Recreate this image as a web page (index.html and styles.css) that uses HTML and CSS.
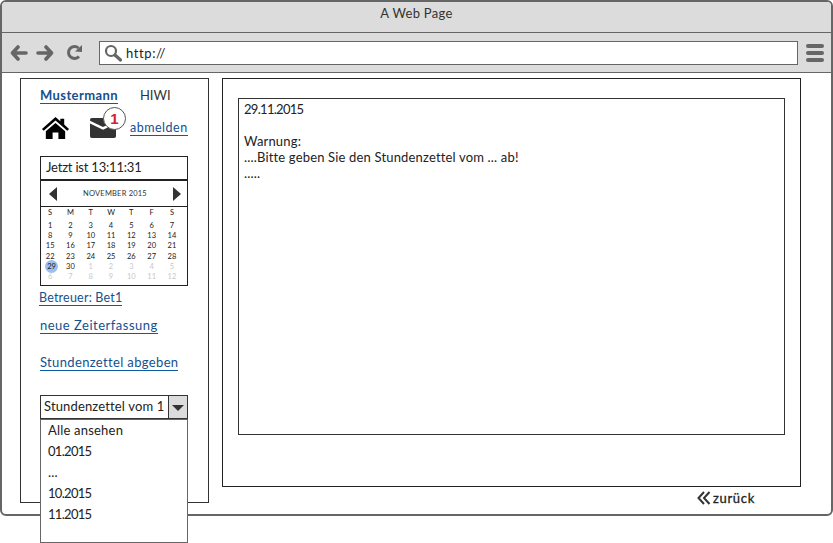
FILE: index.html
```html
<!DOCTYPE html>
<html lang="de">
<head>
<meta charset="utf-8">
<title>A Web Page</title>
<link rel="stylesheet" href="styles.css">
</head>
<body>
<div class="window">
  <header class="titlebar">A Web Page</header>
  <div class="toolbar">
    <svg class="nav-icon" width="18" height="16" viewBox="0 0 18 16"><path d="M8 2 2.500 8 8 14M3 8H16" fill="none" stroke="#666" stroke-width="3.600" stroke-linecap="round" stroke-linejoin="round"/></svg>
    <svg class="nav-icon" width="18" height="16" viewBox="0 0 18 16"><path d="M10 2 15.500 8 10 14M15 8H2" fill="none" stroke="#666" stroke-width="3.600" stroke-linecap="round" stroke-linejoin="round"/></svg>
    <svg class="reload" width="17" height="17" viewBox="0 0 17 17"><path d="M13 12.500A6 6 0 1 1 12.500 4" fill="none" stroke="#666" stroke-width="3"/><path d="M9 7.500 16 8V1Z" fill="#666"/></svg>
    <div class="address">
      <svg width="18" height="18" viewBox="0 0 18 18"><circle cx="7" cy="7" r="5" fill="none" stroke="#666" stroke-width="2.200"/><path d="M11 11 16.500 16" stroke="#666" stroke-width="3.200" stroke-linecap="round"/></svg>
      <span>http://</span>
    </div>
    <div class="menu"><i></i><i></i><i></i></div>
  </div>
  <div class="content">
    <aside class="sidebar">
      <div class="user-row">
        <a class="link bold" href="#">Mustermann</a>
        <span class="role">HIWI</span>
      </div>
      <div class="icon-row">
        <svg class="home" width="29" height="24" viewBox="0 0 30 26" preserveAspectRatio="none"><path d="M15 1 1 14l1.800 2L15 5l12.200 11 1.800-2-5-4.700V3h-4v2.600Z" fill="#000"/><path d="M5 16.500 15 7.500l10 9V25h-7v-7h-6v7H5Z" fill="#000"/></svg>
        <div class="mail">
          <svg width="26" height="20" viewBox="0 0 28 22" preserveAspectRatio="none"><path d="M2 0h24a2 2 0 0 1 2 2v1L14 10 0 3V2a2 2 0 0 1 2-2ZM0 6l14 7 14-7v14a2 2 0 0 1-2 2H2a2 2 0 0 1-2-2Z" fill="#333"/></svg>
          <span class="badge">1</span>
        </div>
        <a class="link" href="#">abmelden</a>
      </div>
      <div class="clock">Jetzt ist 13:11:31</div>
      <div class="calendar">
        <div class="cal-head">
          <span class="arrow left"></span>
          <span class="month">NOVEMBER 2015</span>
          <span class="arrow right"></span>
        </div>
        <div class="cal-grid">
          <span>S</span><span>M</span><span>T</span><span>W</span><span>T</span><span>F</span><span>S</span>
          <span>1</span><span>2</span><span>3</span><span>4</span><span>5</span><span>6</span><span>7</span>
          <span>8</span><span>9</span><span>10</span><span>11</span><span>12</span><span>13</span><span>14</span>
          <span>15</span><span>16</span><span>17</span><span>18</span><span>19</span><span>20</span><span>21</span>
          <span>22</span><span>23</span><span>24</span><span>25</span><span>26</span><span>27</span><span>28</span>
          <span class="today">29</span><span>30</span><span class="other">1</span><span class="other">2</span><span class="other">3</span><span class="other">4</span><span class="other">5</span>
          <span class="other">6</span><span class="other">7</span><span class="other">8</span><span class="other">9</span><span class="other">10</span><span class="other">11</span><span class="other">12</span>
        </div>
      </div>
      <a class="link betreuer" href="#">Betreuer: Bet1</a>
      <a class="link neue" href="#">neue Zeiterfassung</a>
      <a class="link abgeben" href="#">Stundenzettel abgeben</a>
      <div class="combo">
        <div class="combo-field">
          <span class="combo-text">Stundenzettel vom 1</span>
          <span class="combo-btn"><b></b></span>
        </div>
        <ul class="combo-list">
          <li>Alle ansehen</li>
          <li class="num">01.2015</li>
          <li>...</li>
          <li class="num">10.2015</li>
          <li class="num">11.2015</li>
        </ul>
      </div>
    </aside>
    <div class="main-col">
      <main class="main">
        <div class="message">
          <p class="num">29.11.2015</p>
          <p class="warn">Warnung:</p>
          <p>....Bitte geben Sie den Stundenzettel vom ... ab!</p>
          <p>.....</p>
        </div>
      </main>
      <a class="back" href="#">
        <svg width="14" height="14" viewBox="0 0 14 14"><path d="M7 1 1.500 7 7 13M12.500 1 7 7 12.500 13" fill="none" stroke="#333" stroke-width="2"/></svg>
        <span>zurück</span>
      </a>
    </div>
  </div>
</div>
</body>
</html>
```
FILE: styles.css
```css
* { box-sizing: border-box; }
html, body { margin: 0; padding: 0; }
body {
  width: 833px;
  height: 543px;
  overflow: hidden;
  background: #fff;
  font-family: "Lato", "Liberation Sans", sans-serif;
  color: #222;
}
.window {
  width: 833px;
  height: 516px;
  border: 2px solid #666;
  border-radius: 6px;
  display: flex;
  flex-direction: column;
}
.titlebar {
  height: 31px;
  background: #dcdcdc;
  border-bottom: 1px solid #666;
  border-radius: 4px 4px 0 0;
  text-align: center;
  font-size: 13px;
  line-height: 22px;
  letter-spacing: .3px;
  color: #333;
}
.toolbar {
  height: 40px;
  background: #dcdcdc;
  border-bottom: 1px solid #666;
  display: flex;
  align-items: center;
  padding: 0 7px 0 8px;
}
.nav-icon { margin-right: 8px; }
.reload { margin: 0 8px 0 4px; }
.address {
  width: 699px;
  height: 24px;
  margin-left: 8px;
  background: #fff;
  border: 1px solid #666;
  display: flex;
  align-items: center;
  gap: 4px;
  padding-left: 4px;
  font-size: 13px;
  letter-spacing: .6px;
}
.menu {
  margin-left: 8px;
  width: 18px;
  display: flex;
  flex-direction: column;
  gap: 3px;
}
.menu i { height: 4px; background: #666; border-radius: 2px; }
.content {
  flex: 1;
  min-height: 0;
  display: flex;
  padding: 5px 30px 0 18px;
  gap: 13px;
}
.sidebar {
  position: relative;
  width: 189px;
  height: 425px;
  border: 1px solid #333;
  padding: 9px 19px 0;
  display: flex;
  flex-direction: column;
  align-items: flex-start;
}
.link {
  color: #14508f;
  font-size: 13px;
  line-height: 15px;
  letter-spacing: .5px;
  text-decoration: none;
  border-bottom: 1px solid #0a5aa5;
}
.bold { font-weight: 700; letter-spacing: .4px; }
.user-row { display: flex; gap: 22px; align-items: flex-start; height: 18px; }
.role { font-size: 13px; line-height: 15px; letter-spacing: 0; color: #333; }
.icon-row {
  display: flex;
  align-items: flex-end;
  height: 27px;
  margin-top: 8px;
  width: 148px;
  margin-bottom: 15px;
}
.home { margin: 0 19px 1px 1px; }
.mail { position: relative; width: 26px; height: 23px; margin: 0 14px 3px 1px; }
.mail svg { display: block; width: 26px; height: 20px; margin-top: 3px; }
.badge {
  position: absolute;
  left: 13px;
  top: -8px;
  width: 23px;
  height: 23px;
  border: 1px solid #555;
  border-radius: 50%;
  background: #fff;
  color: #d2202c;
  font: 700 15px/21px "Liberation Sans", sans-serif;
  text-align: center;
}
.icon-row .link { font-size: 12.500px; margin-bottom: 5px; }
.clock {
  width: 148px;
  height: 24px;
  border: 1px solid #222;
  padding-left: 5px;
  font-size: 13px;
  line-height: 21px;
  letter-spacing: -.2px;
}
.calendar {
  width: 148px;
  height: 106px;
  border: 1px solid #222;
}
.cal-head {
  height: 26px;
  border-bottom: 1px solid #222;
  display: flex;
  align-items: center;
  justify-content: space-between;
  padding: 0 6px 0 8px;
}
.month { font-size: 7.500px; letter-spacing: .2px; color: #333; }
.arrow { width: 0; height: 0; border-top: 7px solid transparent; border-bottom: 7px solid transparent; }
.arrow.left { border-right: 8px solid #333; }
.arrow.right { border-left: 8px solid #333; }
.cal-grid {
  display: grid;
  grid-template-columns: repeat(7, 20.300px);
  grid-template-rows: 13px;
  grid-auto-rows: 10.200px;
  padding: 1px 0 0 0;
  margin-left: -1px;
  font-size: 7.500px;
  line-height: 10.200px;
  text-align: center;
  color: #222;
}
.cal-grid .other { color: #c8c8c8; }
.cal-grid .today {
  background: #9dbfee;
  border-radius: 50%;
  width: 13px;
  height: 13px;
  margin: -2px 0 0 5px;
  line-height: 13px;
}
.betreuer { margin: 4px 0 0 -1px; font-size: 12.500px; letter-spacing: .2px; }
.neue { margin-top: 12px; }
.abgeben { margin-top: 21px; letter-spacing: .35px; }
.combo { margin-top: 24px; width: 148px; }
.combo-field {
  height: 24px;
  border: 1px solid #333;
  display: flex;
  background: #fff;
}
.combo-text {
  flex: 1;
  white-space: nowrap;
  overflow: hidden;
  padding-left: 3px;
  font-size: 13px;
  line-height: 21px;
  letter-spacing: .15px;
}
.combo-btn {
  width: 19px;
  background: #dcdcdc;
  border-left: 1px solid #333;
  display: flex;
  align-items: center;
  justify-content: center;
}
.combo-btn b {
  width: 0;
  height: 0;
  border-left: 6px solid transparent;
  border-right: 6px solid transparent;
  border-top: 6px solid #333;
  margin-top: 2px;
}
.combo-list {
  position: absolute;
  left: 19px;
  top: 340px;
  width: 148px;
  height: 124px;
  margin: 0;
  padding: 0 0 0 7px;
  list-style: none;
  background: #fff;
  border: 1px solid #666;
  font-size: 13px;
  line-height: 21px;
  letter-spacing: .2px;
}
.main-col { width: 579px; display: flex; flex-direction: column; }
.main {
  height: 409px;
  border: 1px solid #222;
  padding: 19px 15px 0;
}
.message {
  height: 337px;
  border: 1px solid #333;
  padding: 2px 5px;
  font-size: 13px;
  line-height: 16px;
  letter-spacing: .17px;
}
.message p { margin: 0; }
.message .warn { margin-top: 16px; }
.combo-list .num, .message .num { letter-spacing: -.7px; }
.back {
  align-self: flex-end;
  margin: 3px 46px 0 0;
  display: flex;
  align-items: center;
  gap: 2px;
  color: #222;
  font-size: 13px;
  text-decoration: none;
  letter-spacing: .7px;
  -webkit-text-stroke: .3px #222;
}
```
